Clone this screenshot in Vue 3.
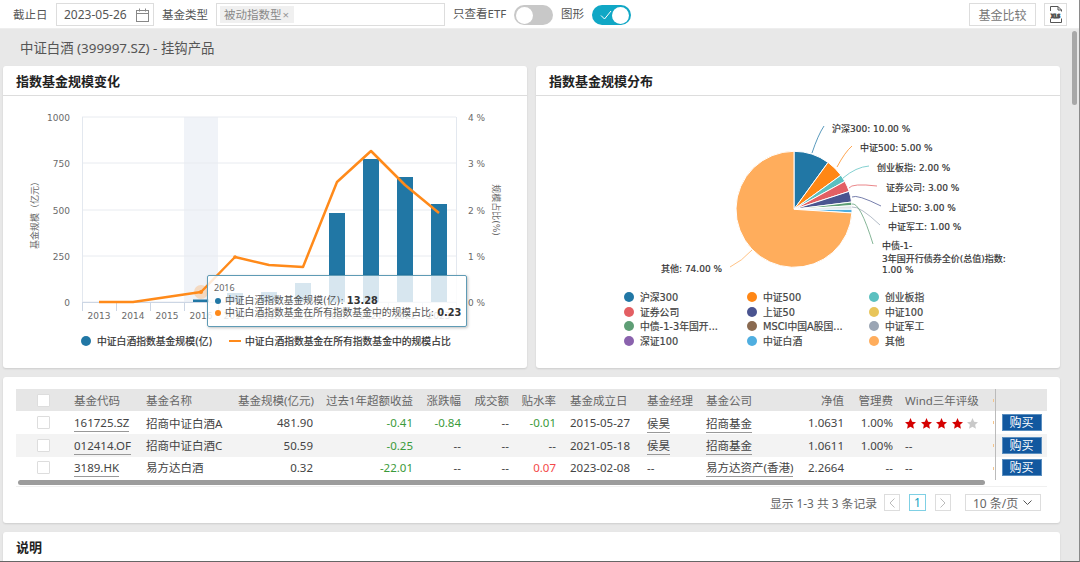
<script setup>
const years = [2013, 2014, 2015, 2016, 2017, 2018, 2019, 2020, 2021, 2022, 2023]
const slot = 34
const cx = (i) => 82 + slot * i + slot / 2
const barTops = [302, 302, 302, 299.5, 293, 292, 283, 213, 159, 177, 204]
const bars = barTops.map((top, i) => ({ x: cx(i) - 8, y: top, h: 302 - top })).filter((b) => b.h > 0)
const lineY = [302, 302, 297, 292, 257, 265, 267, 182, 151, 185, 213]
const linePoints = lineY.map((y, i) => `${cx(i)},${y}`).join(' ')
const ticks = Array.from({ length: 12 }, (_, i) => 82 + slot * i)
const gridY = [
  { y: 117, l: '1000', r: '4 %' },
  { y: 163, l: '750', r: '3 %' },
  { y: 210, l: '500', r: '2 %' },
  { y: 256, l: '250', r: '1 %' },
  { y: 302, l: '0', r: '0 %' }
]

const PIE = { x: 794, y: 209.3, r: 58 }
const slices = [
  { v: 10, c: '#2177a5' },
  { v: 5, c: '#ff8715' },
  { v: 2, c: '#5bc0c0' },
  { v: 3, c: '#e35f63' },
  { v: 3, c: '#4a5490' },
  { v: 1, c: '#5e9e75' },
  { v: 1, c: '#dfe3e9' },
  { v: 1, c: '#4faee0' },
  { v: 74, c: '#ffad5c' }
]
let acc = 0
const slicePaths = slices.map((s) => {
  const a0 = (acc / 100) * Math.PI * 2
  acc += s.v
  const a1 = (acc / 100) * Math.PI * 2
  const p = (a) => `${(PIE.x + PIE.r * Math.sin(a)).toFixed(2)} ${(PIE.y - PIE.r * Math.cos(a)).toFixed(2)}`
  return { d: `M${PIE.x} ${PIE.y}L${p(a0)}A${PIE.r} ${PIE.r} 0 ${s.v > 50 ? 1 : 0} 1 ${p(a1)}Z`, c: s.c }
})
const leaders = [
  { d: 'M812 153Q818 135 824 126', c: '#2177a5' },
  { d: 'M837 167Q845 152 852 146', c: '#ff8715' },
  { d: 'M843 178Q856 167 869 166', c: '#5bc0c0' },
  { d: 'M849 188Q852 183 877 186', c: '#e35f63' },
  { d: 'M852 197Q857 194 881 206', c: '#4a5490' },
  { d: 'M852 207Q860 206 880 225', c: '#9aa5b4' },
  { d: 'M852 204Q860 202 873 244', c: '#5e9e75' },
  { d: 'M752 250Q742 261 730 267', c: '#ffad5c' }
]
const pieLabels = [
  { x: 832, y: 131.5, t: '沪深300: 10.00 %' },
  { x: 860, y: 151, t: '中证500: 5.00 %' },
  { x: 877, y: 171, t: '创业板指: 2.00 %' },
  { x: 886, y: 190.5, t: '证券公司: 3.00 %' },
  { x: 889, y: 210.5, t: '上证50: 3.00 %' },
  { x: 888, y: 229.5, t: '中证军工: 1.00 %' },
  { x: 882, y: 248.5, t: '中债-1-' },
  { x: 882, y: 261.5, t: '3年国开行债券全价(总值)指数:' },
  { x: 882, y: 272.5, t: '1.00 %' },
  { x: 661, y: 271.5, t: '其他: 74.00 %' }
]
const pieLegend = [
  ['沪深300', '#2177a5'], ['中证500', '#ff8715'], ['创业板指', '#5bc0c0'],
  ['证券公司', '#e35f63'], ['上证50', '#4a5490'], ['中证100', '#e8c55a'],
  ['中债-1-3年国开...', '#5e9e75'], ['MSCI中国A股国...', '#8a6a50'], ['中证军工', '#9aa5b4'],
  ['深证100', '#8a62ad'], ['中证白酒', '#4faee0'], ['其他', '#ffad5c']
].map(([t, c], i) => ({ t, c, x: [629, 752, 874][i % 3], y: [297, 312, 326, 341][Math.floor(i / 3)] }))

const columns = [52, 72, 92, 87, 100, 48, 48, 49, 77, 59, 90, 60, 49, 96, 52]
const headers = [
  { t: '基金代码' }, { t: '基金名称' }, { t: '基金规模(亿元)', r: 1 }, { t: '过去1年超额收益', r: 1 },
  { t: '涨跌幅', r: 1 }, { t: '成交额', r: 1 }, { t: '贴水率', r: 1 }, { t: '基金成立日' },
  { t: '基金经理' }, { t: '基金公司' }, { t: '净值', r: 1 }, { t: '管理费', r: 1 }, { t: 'Wind三年评级' }
]
const rows = [
  { code: '161725.SZ', name: '招商中证白酒A', size: '481.90', ex: '-0.41', exC: 'up', chg: '-0.84', chgC: 'up', vol: '--', prem: '-0.01', premC: 'up', date: '2015-05-27', mgr: '侯昊', co: '招商基金', nav: '1.0631', fee: '1.00%', stars: 4 },
  { code: '012414.OF', name: '招商中证白酒C', size: '50.59', ex: '-0.25', exC: 'up', chg: '--', vol: '--', prem: '--', date: '2021-05-18', mgr: '侯昊', co: '招商基金', nav: '1.0611', fee: '1.00%', stars: 0 },
  { code: '3189.HK', name: '易方达白酒', size: '0.32', ex: '-22.01', exC: 'up', chg: '--', vol: '--', prem: '0.07', premC: 'down', date: '2023-02-08', mgr: '--', co: '易方达资产(香港)', nav: '2.2664', fee: '--', stars: 0 }
]
</script>

<template>
  <div class="page">
    <header class="toolbar">
      <span class="lab lab-date">截止日</span>
      <div class="field date">
        <span>2023-05-26</span>
        <svg class="cal" width="13" height="14" viewBox="0 0 13 14" fill="none" stroke="#888" stroke-width="1">
          <rect x="0.5" y="2.5" width="12" height="11" />
          <path d="M0.5 5.5H12.5M3.5 0.5V3.5M9.5 0.5V3.5" />
        </svg>
      </div>
      <span class="lab lab-type">基金类型</span>
      <div class="field select">
        <span class="tag">被动指数型<i>×</i></span>
      </div>
      <span class="lab lab-etf">只查看ETF</span>
      <div class="toggle"><b></b></div>
      <span class="lab lab-graph">图形</span>
      <div class="toggle on">
        <svg width="12" height="10" viewBox="0 0 12 10" fill="none" stroke="#fff" stroke-width="1"><path d="M1 5.5L4.500 9L11 1" /></svg>
        <b></b>
      </div>
      <button class="btn-compare">基金比较</button>
      <button class="btn-xls">
        <svg width="15" height="17" viewBox="0 0 15 17" fill="none" stroke="#555" stroke-width="1">
          <path d="M2.500 5V.5H10L13.500 4V16.500H2.500V13" />
          <path d="M10 .5V4H13.500" />
          <rect x="0.5" y="5.500" width="14" height="7" fill="#fff" stroke="none" />
          <text x="7.500" y="11.500" class="xls-text">XLS</text>
        </svg>
      </button>
    </header>

    <main class="main">
      <h2 class="crumb">中证白酒 (399997.SZ) - 挂钩产品</h2>
      <section class="charts">
        <article class="card chart-card">
          <h3 class="card-title">指数基金规模变化</h3>
          <div class="chart-body">
            <svg class="chart" width="524" height="272" viewBox="3 96 524 272">
              <rect x="184" y="117" width="34" height="185" fill="#f0f3f8" />
              <path v-for="g in gridY" :key="g.y" :d="`M82 ${g.y}H456`" stroke="#e8ebf0" fill="none" />
              <path d="M82.500 117V302M456.500 117V302" stroke="#e3e8ef" fill="none" />
              <path v-for="t in ticks" :key="t" :d="`M${t + 0.5} 302V311`" stroke="#ccd6e4" fill="none" />
              <path d="M82 302.500H456" stroke="#ccd6e4" fill="none" />
              <rect v-for="b in bars" :key="b.x" :x="b.x" :y="b.y" width="16" :height="b.h" fill="#2177a5" />
              <polyline :points="linePoints" fill="none" stroke="#ff8a1a" stroke-width="2.500" stroke-linejoin="round" />
              <circle cx="201" cy="292" r="7" fill="#ff8a1a" opacity=".25" />
              <circle cx="201" cy="292" r="2" fill="#ff8a1a" />
              <circle cx="235" cy="257" r="1.800" fill="#ff8a1a" />
              <text v-for="g in gridY" :key="g.l" x="70" :y="g.y + 3.500" class="axis end">{{ g.l }}</text>
              <text v-for="g in gridY" :key="g.r" x="468" :y="g.y + 3.500" class="axis">{{ g.r }}</text>
              <text v-for="(y, i) in years" :key="y" :x="cx(i)" y="318.500" class="axis mid">{{ y }}</text>
              <text class="axis mid" transform="translate(38 213) rotate(-90)">基金规模（亿元）</text>
              <text class="axis mid" transform="translate(493 210) rotate(90)">规模占比(%)</text>
              <circle cx="86" cy="341" r="5" fill="#2177a5" />
              <text x="97" y="344.500" class="legend">中证白酒指数基金规模(亿)</text>
              <path d="M229 341H241" stroke="#ff8a1a" stroke-width="2" />
              <text x="245" y="344.500" class="legend">中证白酒指数基金在所有指数基金中的规模占比</text>
            </svg>
            <div class="tooltip">
              <div class="tip-year">2016</div>
              <div class="tip-row"><i class="dot blue"></i>中证白酒指数基金规模(亿): <b>13.28</b></div>
              <div class="tip-row"><i class="dot orange"></i>中证白酒指数基金在所有指数基金中的规模占比: <b>0.23</b></div>
            </div>
          </div>
        </article>
        <article class="card chart-card">
          <h3 class="card-title">指数基金规模分布</h3>
          <div class="chart-body">
            <svg class="chart" width="524" height="272" viewBox="536 96 524 272">
              <path v-for="(s, i) in slicePaths" :key="i" :d="s.d" :fill="s.c" stroke="#fff" stroke-width="1" />
              <path v-for="(l, i) in leaders" :key="i" :d="l.d" :stroke="l.c" fill="none" opacity=".75" />
              <text v-for="l in pieLabels" :key="l.t" :x="l.x" :y="l.y" class="pie-label">{{ l.t }}</text>
              <g v-for="l in pieLegend" :key="l.t">
                <circle :cx="l.x" :cy="l.y" r="5" :fill="l.c" />
                <text :x="l.x + 11" :y="l.y + 3.500" class="legend light">{{ l.t }}</text>
              </g>
            </svg>
          </div>
        </article>
      </section>

      <section class="card table-card">
        <table class="fund-table">
          <colgroup><col v-for="(w, i) in columns" :key="i" :style="{ width: w + 'px' }" /></colgroup>
          <thead>
            <tr>
              <th class="c-check"><span class="check"></span></th>
              <th v-for="h in headers" :key="h.t" :class="{ right: h.r }">{{ h.t }}</th>
              <th class="c-fixed"></th>
            </tr>
          </thead>
          <tbody>
            <tr v-for="r in rows" :key="r.code">
              <td class="c-check"><span class="check"></span></td>
              <td><a class="link">{{ r.code }}</a></td>
              <td>{{ r.name }}</td>
              <td class="right">{{ r.size }}</td>
              <td class="right" :class="r.exC">{{ r.ex }}</td>
              <td class="right" :class="r.chgC">{{ r.chg }}</td>
              <td class="right">{{ r.vol }}</td>
              <td class="right" :class="r.premC">{{ r.prem }}</td>
              <td>{{ r.date }}</td>
              <td><a v-if="r.mgr !== '--'" class="link">{{ r.mgr }}</a><template v-else>--</template></td>
              <td><a class="link">{{ r.co }}</a></td>
              <td class="right">{{ r.nav }}</td>
              <td class="right">{{ r.fee }}</td>
              <td>
                <span v-if="r.stars" class="stars">
                  <svg v-for="n in 5" :key="n" width="11" height="11" viewBox="0 0 20 20" :fill="n <= r.stars ? '#d40000' : '#c9c9c9'">
                    <polygon points="10,0 12.900,6.600 20,7.600 14.800,12.400 16.200,19.600 10,16 3.800,19.600 5.200,12.400 0,7.600 7.100,6.600" />
                  </svg>
                </span>
                <template v-else>--</template>
              </td>
              <td class="c-fixed"><button class="buy">购买</button></td>
            </tr>
          </tbody>
        </table>
        <div class="hscroll"><div class="hthumb"></div></div>
        <footer class="pager">
          <span class="pager-info">显示 1-3 共 3 条记录</span>
          <span class="pg">
            <svg width="6" height="10" viewBox="0 0 6 10" fill="none" stroke="#bbb"><path d="M5.500 .5L1 5l4.500 4.500" /></svg>
          </span>
          <span class="pg active">1</span>
          <span class="pg">
            <svg width="6" height="10" viewBox="0 0 6 10" fill="none" stroke="#bbb"><path d="M.5 .5L5 5 .5 9.500" /></svg>
          </span>
          <span class="size-sel">10 条/页
            <svg width="9" height="6" viewBox="0 0 9 6" fill="none" stroke="#555"><path d="M.5 .5L4.500 4.500 8.500 .5" /></svg>
          </span>
        </footer>
      </section>

      <section class="card note-card">
        <h3 class="card-title">说明</h3>
      </section>
    </main>
    <div class="vthumb"></div>
  </div>
</template>

<style>
html, body { margin: 0; height: 100%; overflow: hidden; background: #e8e8e8; }
</style>

<style scoped>
.page {
  position: relative;
  width: 1080px;
  height: 562px;
  box-sizing: border-box;
  overflow: hidden;
  display: flex;
  flex-direction: column;
  background: #e8e8e8;
  border-right: 1px solid #8a8a8a;
  border-bottom: 1px solid #666;
  font-family: "Noto Sans", "Noto Sans CJK SC", sans-serif;
  font-size: 11.5px;
  color: #444;
}
.toolbar {
  height: 29px;
  flex: none;
  box-sizing: border-box;
  padding-top: 3px;
  display: flex;
  align-items: flex-start;
  background: #fff;
  border-bottom: 1px solid #eee;
}
.lab { line-height: 23px; color: #555; white-space: nowrap; }
.lab-date { margin-left: 13px; width: 43px; }
.lab-type { margin-left: 8px; width: 54px; }
.lab-etf { margin-left: 8px; width: 61px; line-height: 21px; }
.lab-graph { margin-left: 8px; width: 31px; line-height: 21px; }
.field {
  height: 23px;
  box-sizing: border-box;
  border: 1px solid #ddd;
  display: flex;
  align-items: center;
}
.date { width: 98px; padding: 0 4px 0 7px; justify-content: space-between; font-size: 12px; color: #555; }
.select { width: 229px; padding-left: 3px; }
.tag {
  width: 74px;
  height: 17px;
  box-sizing: border-box;
  background: #f0f0f0;
  color: #888;
  line-height: 17px;
  padding-left: 4px;
  white-space: nowrap;
  font-size: 11.5px;
}
.tag i { font-style: normal; color: #999; margin-left: 1px; }
.toggle {
  width: 39px;
  height: 20px;
  margin-top: 2px;
  box-sizing: border-box;
  border-radius: 10px;
  background: #c8c8c8;
  padding: 1.500px 2px;
  display: flex;
  align-items: center;
}
.toggle b {
  width: 17px;
  height: 17px;
  border-radius: 50%;
  background: #fff;
}
.toggle.on {
  background: #10a7c5;
  justify-content: space-between;
  padding-left: 8px;
}
.btn-compare, .btn-xls {
  height: 23px;
  box-sizing: border-box;
  border: 1px solid #ddd;
  background: #fff;
  padding: 0;
  font-family: inherit;
  font-size: 12px;
  color: #777;
  display: flex;
  align-items: center;
  justify-content: center;
}
.btn-compare { width: 67px; margin-left: 338px; }
.btn-xls { width: 23px; margin-left: 8px; }
.xls-text { font-family: "Noto Sans", sans-serif; font-size: 5px; font-weight: 700; fill: #333; text-anchor: middle; }
.main {
  flex: 1;
  min-height: 0;
  padding: 0 0 0 3px;
  display: flex;
  flex-direction: column;
  gap: 9px;
}
.crumb {
  margin: 0 0 0 17px;
  height: 28px;
  line-height: 38px;
  font-size: 13.400px;
  font-weight: 400;
  color: #555;
}
.charts { display: flex; gap: 9px; }
.card {
  width: 1057px;
  background: #fff;
  border-radius: 3px;
  box-shadow: 0 1px 2px rgba(0, 0, 0, .12);
  flex: none;
}
.chart-card { width: 524px; height: 302px; }
.card-title {
  margin: 0;
  height: 30px;
  box-sizing: border-box;
  padding-left: 13px;
  line-height: 31px;
  font-size: 13px;
  font-weight: 700;
  color: #222;
  border-bottom: 1px solid #ddd;
}
.chart-body { position: relative; height: 272px; }
.chart { display: block; font-family: "DejaVu Sans", "Noto Sans CJK SC", sans-serif; }
.axis { font-size: 9px; fill: #6a6a6a; }
.end { text-anchor: end; }
.mid { text-anchor: middle; }
.legend {
  font-size: 9.800px;
  fill: #333;
  stroke: #333;
  stroke-width: .2px;
}
.legend.light { fill: #444; stroke: #444; }
.pie-label {
  font-size: 9px;
  fill: #333;
  stroke: #333;
  stroke-width: .2px;
}
.tooltip {
  position: absolute;
  left: 204px;
  top: 179px;
  width: 260px;
  height: 52px;
  box-sizing: border-box;
  padding: 6px 0 0 6px;
  background: rgba(255, 255, 255, .82);
  border: 1px solid #5f9bb5;
  border-radius: 2px;
  box-shadow: 1px 1px 3px rgba(0, 0, 0, .25);
  font-family: "DejaVu Sans", "Noto Sans CJK SC", sans-serif;
  font-size: 9.800px;
  line-height: 12px;
  color: #555;
  white-space: nowrap;
}
.tip-year { height: 13px; color: #666; font-size: 9px; font-family: "Noto Sans", sans-serif; }
.tip-row { display: flex; align-items: center; white-space: pre; }
.tip-row b { font-weight: 700; color: #333; }
.dot { width: 6px; height: 6px; border-radius: 50%; margin: 0 4px 0 1px; flex: none; }
.blue { background: #2177a5; }
.orange { background: #ff8a1a; }
.table-card {
  height: 146px;
  box-sizing: border-box;
  padding: 12px 13px 0;
}
.fund-table {
  width: 1031px;
  table-layout: fixed;
  border-collapse: collapse;
  white-space: nowrap;
}
.fund-table th, .fund-table td {
  padding: 0 6px;
  height: 23px;
  box-sizing: border-box;
  text-align: left;
  font-weight: 400;
  overflow: visible;
}
.fund-table th { height: 22px; background: #e6e6e6; color: #666; }
.fund-table tbody tr:nth-child(2) td { background: #f3f3f3; padding-bottom: 1px; }
.fund-table tbody tr:nth-child(3) td { padding-bottom: 3px; }
.fund-table .right { text-align: right; }
.fund-table th:nth-child(8), .fund-table td:nth-child(8) { padding-right: 8px; }
.fund-table .c-check { padding-left: 21px; padding-right: 0; }
.fund-table .c-fixed { position: relative; padding-left: 6px; padding-right: 6px; border-left: 1px solid #bbb; }
.c-fixed::before {
  content: "";
  position: absolute;
  left: -3px;
  top: 10px;
  width: 1px;
  height: 3px;
  background: #f3c48c;
}
.check {
  display: block;
  width: 11px;
  height: 11px;
  background: #fff;
  border: 1px solid #ddd;
  border-radius: 1px;
}
.link { border-bottom: 1px solid #999; padding-bottom: 1px; }
.up { color: #3a9a3a; }
.down { color: #f44848; }
.stars { display: flex; gap: 4.500px; align-items: center; padding-top: 2px; }
.buy {
  display: block;
  width: 40px;
  height: 17px;
  padding: 0;
  border: 1px solid #5b8fc0;
  background: #12589f;
  color: #fff;
  font-family: inherit;
  font-size: 12px;
  line-height: 15px;
}
.hscroll {
  height: 7px;
  width: 1031px;
  border-bottom: 1px solid #f0f0f0;
  box-sizing: border-box;
}
.hthumb {
  margin-left: 2px;
  width: 967px;
  height: 5px;
  background: #9c9c9c;
  border-radius: 3px;
}
.pager {
  margin-top: 7px;
  width: 1025px;
  height: 17px;
  display: flex;
  align-items: center;
  justify-content: flex-end;
  color: #666;
  font-size: 12px;
}
.pager-info { margin-right: 7px; white-space: nowrap; font-size: 11.800px; }
.pg {
  width: 16px;
  height: 17px;
  box-sizing: border-box;
  border: 1px solid #ddd;
  margin-right: 9px;
  display: flex;
  align-items: center;
  justify-content: center;
}
.pg.active { border-color: #7fd0e4; color: #10a0c0; width: 17px; }
.size-sel {
  width: 76px;
  height: 17px;
  margin-left: 5px;
  box-sizing: border-box;
  border: 1px solid #ddd;
  padding: 0 8px 0 7px;
  display: flex;
  align-items: center;
  justify-content: space-between;
  white-space: nowrap;
}
.note-card { height: 40px; border-radius: 3px 3px 0 0; }
.note-card .card-title { border-bottom: none; }
.vthumb {
  position: absolute;
  left: 1072px;
  top: 31px;
  width: 5px;
  height: 74px;
  border-radius: 3px;
  background: #a8a8a8;
}
</style>
